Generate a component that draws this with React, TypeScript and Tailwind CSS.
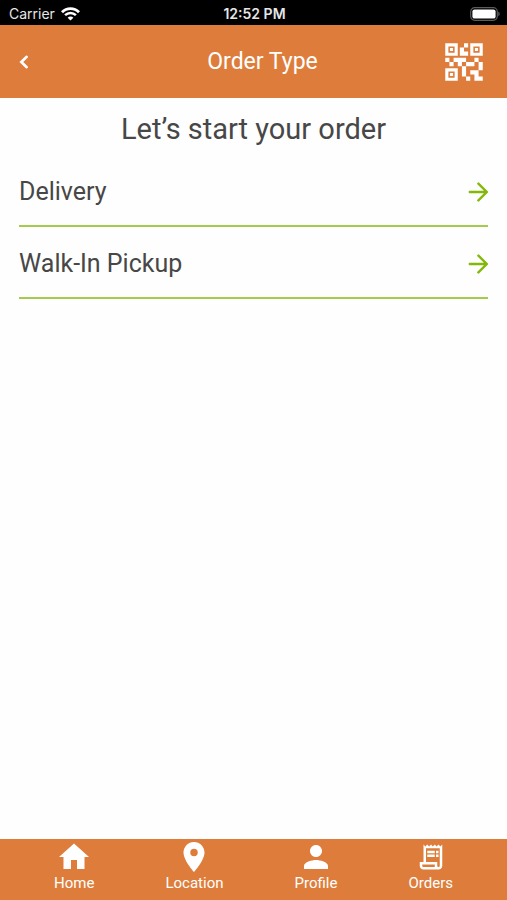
import type { ReactNode } from "react";
import { MdHome, MdLocationOn, MdOutlineReceiptLong, MdPerson, MdQrCode2 } from "react-icons/md";

function StatusBar() {
  return (
    <div className="grid h-[25px] grid-cols-3 items-center bg-black pt-[2px] pr-[7px] pl-[9px] font-['Inter',sans-serif] text-[14px] leading-5 text-[#e6e6e6]">
      <div className="flex items-center gap-[6px]">
        <span>Carrier</span>
        <svg width="19" height="14" viewBox="0 0 19 14" fill="none" aria-hidden="true">
          <path d="M1 5.2C5.8 0.3 13.2 0.3 18 5.2" stroke="#fff" strokeWidth="2.8" />
          <path d="M4.1 8.2C7.2 5.1 11.8 5.1 14.9 8.2" stroke="#fff" strokeWidth="2.5" />
          <path d="M9.5 13.6 6.6 10.7C8.2 9.2 10.8 9.2 12.4 10.7Z" fill="#fff" />
        </svg>
      </div>
      <span className="text-center font-semibold whitespace-nowrap">12:52 PM</span>
      <svg className="justify-self-end" width="30" height="14" viewBox="0 0 30 14" aria-hidden="true">
        <rect x="0.7" y="0.7" width="26.6" height="12.6" rx="4" fill="none" stroke="#5c5c5c" strokeWidth="1.2" />
        <rect x="2.4" y="2.4" width="23.2" height="9.2" rx="2.2" fill="#fff" />
        <path d="M28.4 4.8c1.6.6 1.6 3.8 0 4.4z" fill="#6c6c6c" />
      </svg>
    </div>
  );
}

function Header() {
  return (
    <header className="grid h-[73px] grid-cols-[68px_1fr_50px] items-center bg-[#de7d3b] px-[18px] text-white">
      <button type="button" aria-label="Back" className="flex h-10 items-center">
        <svg width="12" height="16" viewBox="0 0 12 16" fill="none" aria-hidden="true">
          <path d="M8.7 2.8 3.3 8l5.4 5.2" stroke="currentColor" strokeWidth="2.6" strokeLinecap="round" strokeLinejoin="miter" />
        </svg>
      </button>
      <h1 className="text-center text-[23px] leading-7">Order Type</h1>
      <button type="button" aria-label="Scan QR code">
        <MdQrCode2 size={50} />
      </button>
    </header>
  );
}

function OrderOption({ label }: { label: string }) {
  return (
    <li>
      <button
        type="button"
        className="flex h-[72px] w-full items-center justify-between border-b-2 border-[#a5cb4c] pt-1 text-left text-[25px] leading-8"
      >
        {label}
        <svg width="20" height="20" viewBox="0 0 20 20" fill="none" aria-hidden="true">
          <path d="M1.8 10H18.4M10.4 1.6 18.8 10l-8.4 8.4" stroke="#84b90b" strokeWidth="2.4" strokeLinecap="round" strokeLinejoin="miter" />
        </svg>
      </button>
    </li>
  );
}

function Tab({ label, children }: { label: string; children: ReactNode }) {
  return (
    <a href="#" className="flex flex-col items-center">
      <span className="flex h-9 items-center">{children}</span>
      <span className="text-[15px] leading-4">{label}</span>
    </a>
  );
}

export default function App() {
  return (
    <div className="flex min-h-screen flex-col bg-[#fefefe] font-['Roboto',sans-serif] text-[#474747]">
      <StatusBar />
      <Header />
      <main className="flex-1 px-[19px] pt-[13px]">
        <h2 className="text-center text-[29px] leading-9">Let’s start your order</h2>
        <ul className="mt-2">
          <OrderOption label="Delivery" />
          <OrderOption label="Walk-In Pickup" />
        </ul>
      </main>
      <nav className="flex h-[61px] justify-between bg-[#de7d3b] px-[54px] text-white">
        <Tab label="Home">
          <MdHome size={36} />
        </Tab>
        <Tab label="Location">
          <MdLocationOn size={36} />
        </Tab>
        <Tab label="Profile">
          <MdPerson size={36} />
        </Tab>
        <Tab label="Orders">
          <MdOutlineReceiptLong size={30} />
        </Tab>
      </nav>
    </div>
  );
}
